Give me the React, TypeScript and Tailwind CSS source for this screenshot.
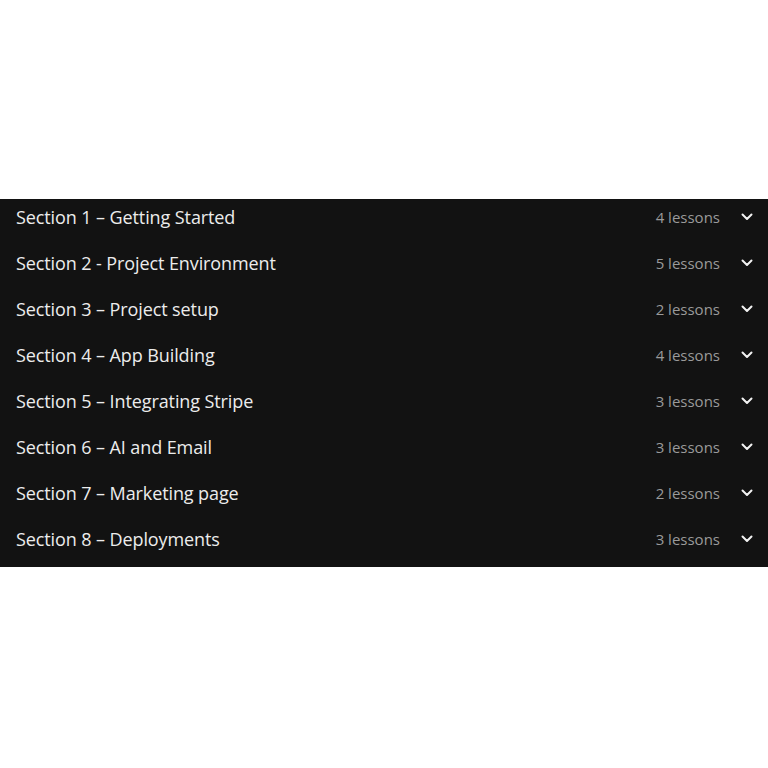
import React from "react";

const sections = [
  { title: "Section 1 – Getting Started", lessons: 4 },
  { title: "Section 2 - Project Environment", lessons: 5 },
  { title: "Section 3 – Project setup", lessons: 2 },
  { title: "Section 4 – App Building", lessons: 4 },
  { title: "Section 5 – Integrating Stripe", lessons: 3 },
  { title: "Section 6 – AI and Email", lessons: 3 },
  { title: "Section 7 – Marketing page", lessons: 2 },
  { title: "Section 8 – Deployments", lessons: 3 },
];

function Chevron() {
  return (
    <svg width="12" height="8" viewBox="0 0 12 8" fill="none">
      <path d="M1.5 1.5 L6 6 L10.5 1.5" stroke="#f2f2f2" strokeWidth="2" strokeLinecap="round" strokeLinejoin="round" />
    </svg>
  );
}

export default function App() {
  return (
    <div className="w-[768px] h-[768px] bg-white flex flex-col" style={{ fontFamily: '"Open Sans", "Noto Sans", sans-serif' }}>
      <div className="h-[199px]" />
      <div className="bg-[#121212] flex flex-col">
        {sections.map((s) => (
          <div key={s.title} className="h-[46px] flex items-start pt-[7px] pl-[16px] pr-[15px]">
            <span className="text-[18px] leading-[22px] text-[#ececec] tracking-[-0.1px]">{s.title}</span>
            <span className="ml-auto text-[15px] leading-[22px] text-[#9a9a9a]">{s.lessons} lessons</span>
            <span className="ml-[21px] h-[22px] flex items-center">
              <Chevron />
            </span>
          </div>
        ))}
      </div>
    </div>
  );
}
